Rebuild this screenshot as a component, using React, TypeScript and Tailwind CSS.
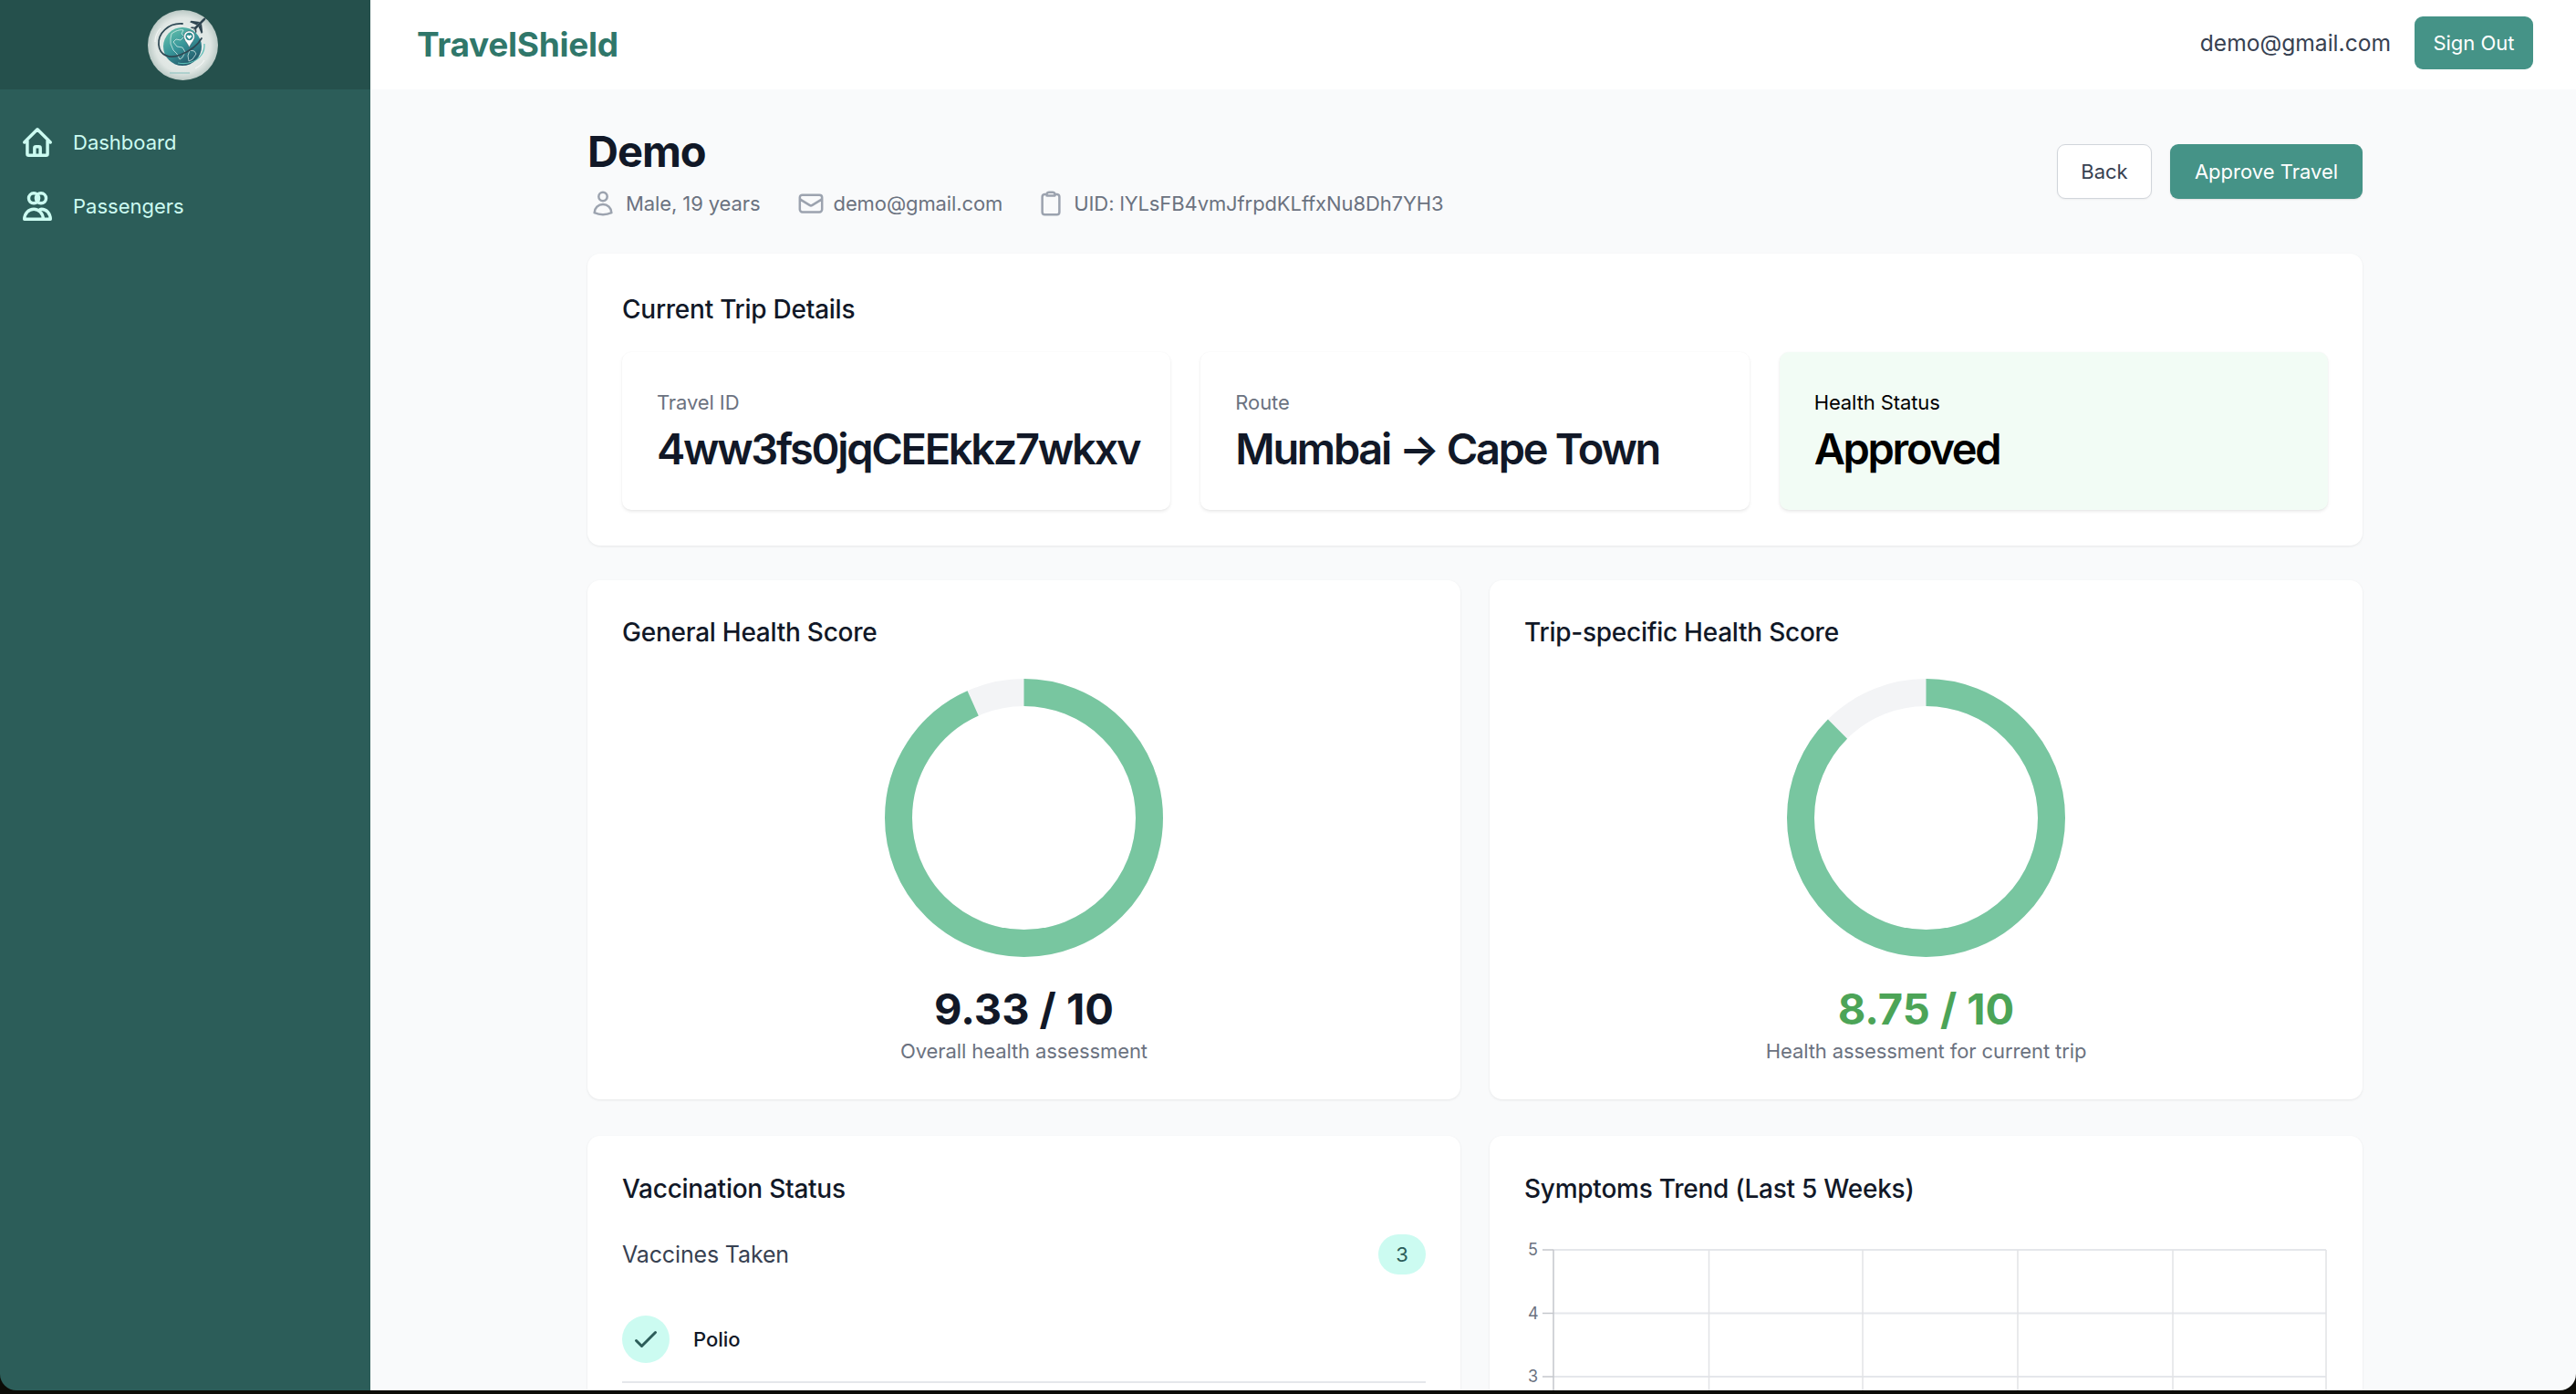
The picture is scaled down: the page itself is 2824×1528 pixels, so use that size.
import type { ReactNode } from 'react';

const RING_RADIUS = 137.5;
const RING_LENGTH = 2 * Math.PI * RING_RADIUS;

const gridRows = [20, 89.5, 159];
const gridColumns = [32, 202.5, 371, 541, 711, 879];

function Logo() {
  return (
    <svg viewBox="0 0 77 77" className="w-[77px] h-[77px]">
      <defs>
        <radialGradient id="logoBg" cx="50%" cy="50%" r="50%">
          <stop offset="0%" stopColor="#edf2ef" />
          <stop offset="78%" stopColor="#dfe6e3" />
          <stop offset="100%" stopColor="#bccac6" />
        </radialGradient>
        <linearGradient id="logoGlobe" x1="0" y1="0" x2="0.6" y2="1">
          <stop offset="0%" stopColor="#6cc8ae" />
          <stop offset="55%" stopColor="#38969a" />
          <stop offset="100%" stopColor="#22596a" />
        </linearGradient>
      </defs>
      <circle cx="38.5" cy="38.5" r="38.5" fill="url(#logoBg)" />
      <circle cx="38" cy="40" r="21" fill="url(#logoGlobe)" />
      {/* continents */}
      <path d="M26 26c4-3 9-5 13-4l-2 4 3 3-4 4-5-1-3 3 4 5 6 1 3 5-3 6-3 2-3-6-4-4-3-7 0-6z" fill="none" stroke="#e6f5f1" strokeWidth="0.7" />
      <path d="M46 44l5 1 2 3-4 6-4 2-1-6z" fill="none" stroke="#e6f5f1" strokeWidth="0.7" />
      {/* swoosh */}
      <path d="M38 15C22 14 11 26 12 38c1 12 12 16 24 11 10-4 18-9 23-18" fill="none" stroke="#2f4a55" strokeWidth="1.800" strokeLinecap="round" />
      <path d="M62 37c1 9-5 17-14 20-5 2-10 2-15 1" fill="none" stroke="#5cbdb6" strokeWidth="1.200" />
      <path d="M8 35c0-6 2-11 6-15M52 64c4-2 8-5 10-9" fill="none" stroke="#ffffff" strokeWidth="0.9" opacity="0.8" />
      <path d="M24 69h22" stroke="#9cc9c6" strokeWidth="1.400" />
      {/* pin with heart */}
      <path d="M45.500 23c-3.500 0-6 2.700-6 6 0 4 4 7 6 12 2-5 6-8 6-12 0-3.300-2.500-6-6-6z" fill="#ffffff" stroke="#2f4a55" strokeWidth="0.5" />
      <circle cx="45.500" cy="29" r="4.200" fill="#2f8a8d" />
      <path d="M45.500 32l-2.400-2.500c-1.100-1.500 1.200-2.800 2.400-1.300 1.200-1.500 3.500-.2 2.400 1.300z" fill="#ffffff" />
      {/* plane */}
      <g transform="translate(56 16) rotate(45)" fill="#2f4550">
        <path d="M-1.300 -8c0-3 2.600-3 2.600 0v14l-1.300 2-1.300-2z" />
        <path d="M-1.300 -3L-9 3v2l7.700-3zM1.300 -3L9 3v2L1.300 2z" />
        <path d="M-1 5l-3 2.500V9l3-1.500zM1 5l3 2.500V9l-3-1.500z" />
      </g>
    </svg>
  );
}

function HomeIcon() {
  return (
    <svg viewBox="0 0 24 24" fill="none" stroke="currentColor" strokeWidth="2.200" strokeLinecap="round" strokeLinejoin="round" className="w-[38px] h-[38px]">
      <path d="M3 12l2-2m0 0l7-7 7 7M5 10v10a1 1 0 001 1h3m10-11l2 2m-2-2v10a1 1 0 01-1 1h-3m-6 0a1 1 0 001-1v-4a1 1 0 011-1h2a1 1 0 011 1v4a1 1 0 001 1m-6 0h6" />
    </svg>
  );
}

function PassengersIcon() {
  return (
    <svg viewBox="0 0 24 24" fill="none" stroke="currentColor" strokeWidth="2.200" strokeLinecap="round" strokeLinejoin="round" className="w-[38px] h-[38px]">
      <circle cx="9.500" cy="6.500" r="3.500" />
      <circle cx="14.500" cy="6.500" r="3.500" />
      <path d="M3 21c0-4 3-7 6.500-7s6.500 3 6.500 7z" />
      <path d="M13.800 14.300c.3-.2.700-.3 1-.3 3.500 0 6.200 3 6.200 7h-5" />
    </svg>
  );
}

function UserIcon() {
  return (
    <svg viewBox="0 0 24 24" fill="none" stroke="currentColor" strokeWidth="2" strokeLinecap="round" strokeLinejoin="round" className="w-[30px] h-[30px]">
      <path d="M15.750 6a3.750 3.750 0 1 1-7.500 0 3.750 3.750 0 0 1 7.500 0ZM4.501 20.118a7.500 7.500 0 0 1 14.998 0A17.933 17.933 0 0 1 12 21.750c-2.676 0-5.216-.584-7.499-1.632Z" />
    </svg>
  );
}

function MailIcon() {
  return (
    <svg viewBox="0 0 24 24" fill="none" stroke="currentColor" strokeWidth="2" strokeLinecap="round" strokeLinejoin="round" className="w-[30px] h-[30px]">
      <path d="M21.750 6.750v10.500a2.250 2.250 0 0 1-2.250 2.250h-15a2.250 2.250 0 0 1-2.250-2.250V6.750m19.500 0A2.250 2.250 0 0 0 19.500 4.500h-15a2.250 2.250 0 0 0-2.250 2.250m19.500 0v.243a2.250 2.250 0 0 1-1.070 1.916l-7.500 4.615a2.250 2.250 0 0 1-2.360 0L3.320 8.910a2.250 2.250 0 0 1-1.070-1.916V6.750" />
    </svg>
  );
}

function ClipboardIcon() {
  return (
    <svg viewBox="0 0 24 24" fill="none" stroke="currentColor" strokeWidth="2" strokeLinecap="round" strokeLinejoin="round" className="w-[30px] h-[30px]">
      <path d="M15.666 3.888A2.250 2.250 0 0 0 13.500 2.250h-3c-1.030 0-1.900.693-2.166 1.638m7.332 0c.055.194.084.400.084.612v0a.750.750 0 0 1-.750.750H9a.750.750 0 0 1-.750-.750v0c0-.212.030-.418.084-.612m7.332 0c.646.049 1.288.110 1.927.184 1.100.128 1.907 1.077 1.907 2.185V19.500a2.250 2.250 0 0 1-2.250 2.250H6.750A2.250 2.250 0 0 1 4.500 19.500V6.257c0-1.108.806-2.057 1.907-2.185a48.208 48.208 0 0 1 1.927-.184" />
    </svg>
  );
}

function CheckIcon() {
  return (
    <svg viewBox="0 0 24 24" fill="none" stroke="currentColor" strokeWidth="2" strokeLinecap="round" strokeLinejoin="round" className="w-9 h-9">
      <path d="M5 13l4 4L19 7" />
    </svg>
  );
}

function Card({ className, children }: { className?: string; children: ReactNode }) {
  return (
    <div className={`bg-white rounded-[14px] shadow-[0_1px_3px_rgba(0,0,0,0.08)] px-[38px] ${className ?? ''}`}>
      {children}
    </div>
  );
}

function CardTitle({ children }: { children: ReactNode }) {
  return <h2 className="text-[28px] leading-[38px] font-medium tracking-[-0.25px] text-[#111827]">{children}</h2>;
}

function TripTile({ label, value, green }: { label: string; value: string; green?: boolean }) {
  return (
    <div
      className={`h-[173px] rounded-[10px] px-[38px] pt-[38px] shadow-[0_2px_4px_-1px_rgba(0,0,0,0.12),0_0_2px_rgba(0,0,0,0.04)] ${
        green ? 'bg-[#f2fcf5] text-black' : 'bg-white text-[#111827]'
      }`}
    >
      <div className={`text-[22px] leading-[34px] tracking-[-0.1px] ${green ? 'text-black' : 'text-[#6b7280]'}`}>{label}</div>
      <div className="mt-[4px] text-[47px] leading-[60px] font-semibold tracking-[-2.3px] whitespace-nowrap">{value}</div>
    </div>
  );
}

function ScoreCard({ title, score, note, scoreClass }: { title: string; score: number; note: string; scoreClass: string }) {
  const filled = (score / 10) * RING_LENGTH;
  return (
    <Card className="pt-[38px] pb-[37px]">
      <CardTitle>{title}</CardTitle>
      <div className="mt-[32px] flex justify-center">
        <svg viewBox="0 0 305 305" className="w-[305px] h-[305px] -rotate-90">
          <circle cx="152.500" cy="152.500" r={RING_RADIUS} fill="none" stroke="#f3f4f6" strokeWidth="30" />
          <circle
            cx="152.500"
            cy="152.500"
            r={RING_RADIUS}
            fill="none"
            stroke="#78c6a0"
            strokeWidth="30"
            strokeDasharray={`${filled} ${RING_LENGTH}`}
          />
        </svg>
      </div>
      <div className={`mt-[27px] text-center text-[47px] leading-[60px] font-bold ${scoreClass}`}>{score} / 10</div>
      <div className="text-center text-[22px] leading-[32px] tracking-[-0.1px] text-[#6b7280]">{note}</div>
    </Card>
  );
}

function SymptomsChart() {
  return (
    <svg width="881" height="190" className="mt-[28px] block overflow-hidden">
      {gridRows.map((y, i) => (
        <g key={y}>
          <line x1="32" y1={y} x2="879" y2={y} stroke="#e5e7eb" strokeWidth="2" />
          <line x1="20" y1={y} x2="32" y2={y} stroke="#c4c7cc" strokeWidth="1.500" />
          <text x="4" y={y + 6} fontSize="18" fill="#6b7280">
            {5 - i}
          </text>
        </g>
      ))}
      {gridColumns.map((x, i) => (
        <line key={x} x1={x} y1="20" x2={x} y2="190" stroke={i === 0 ? '#c4c7cc' : '#e2e3e6'} strokeWidth="1.500" />
      ))}
    </svg>
  );
}

export default function App() {
  return (
    <div className="h-screen overflow-hidden bg-[#0c0c07] font-['Inter',sans-serif]">
      <div className="h-[1524px] flex overflow-hidden rounded-b-[18px]">
        {/* Sidebar */}
        <aside className="w-[406px] shrink-0 bg-[#2c5d59] text-[#ccfbf1]">
          <div className="h-[98px] bg-[#25504c] flex items-center justify-center pr-[5px]">
            <Logo />
          </div>
          <nav className="pt-[39px] pl-[22px] flex flex-col gap-[32px]">
            <div className="flex items-center gap-[20px] h-[38px] text-[22px]">
              <HomeIcon />
              <span>Dashboard</span>
            </div>
            <div className="flex items-center gap-[20px] h-[38px] text-[22px]">
              <PassengersIcon />
              <span>Passengers</span>
            </div>
          </nav>
        </aside>

        <div className="flex-1 min-w-0 bg-[#f9fafb]">
          {/* Top bar */}
          <header className="h-[98px] bg-white flex items-center justify-between pl-[51px] pr-[47px]">
            <span className="text-[37px] font-bold tracking-[-0.3px] text-[#30776a]">TravelShield</span>
            <div className="flex items-center gap-[26px] pb-[4px]">
              <span className="text-[24.6px] text-[#374151]">demo@gmail.com</span>
              <button className="h-[58px] w-[130px] rounded-[9px] bg-[#459387] text-white text-[22px]">Sign Out</button>
            </div>
          </header>

          <main className="w-[1946px] ml-[238px] pt-[38px]">
            <div className="flex items-center justify-between">
              <div>
                <h1 className="text-[47px] leading-[60px] font-bold tracking-[-1px] text-[#111827]">Demo</h1>
                <div className="mt-[10px] flex items-center h-[34px] text-[22px] tracking-[-0.1px] text-[#6b7280]">
                  <span className="text-[#9ca3af] ml-[2px]"><UserIcon /></span>
                  <span className="ml-[10px]">Male, 19 years</span>
                  <span className="text-[#9ca3af] ml-[40px]"><MailIcon /></span>
                  <span className="ml-[10px]">demo@gmail.com</span>
                  <span className="text-[#9ca3af] ml-[38px]"><ClipboardIcon /></span>
                  <span className="ml-[10px]">UID: lYLsFB4vmJfrpdKLffxNu8Dh7YH3</span>
                </div>
              </div>
              <div className="flex items-center gap-[20px]">
                <button className="h-[60px] w-[104px] rounded-[9px] bg-white border-[1.5px] border-[#d1d5db] text-[22px] text-[#374151] shadow-[0_1px_2px_rgba(0,0,0,0.05)]">Back</button>
                <button className="h-[60px] w-[211px] rounded-[9px] bg-[#459387] text-white text-[22px] shadow-[0_1px_2px_rgba(0,0,0,0.1)]">Approve Travel</button>
              </div>
            </div>

            <Card className="mt-[38px] h-[320px] pt-[42px]">
              <CardTitle>Current Trip Details</CardTitle>
              <div className="mt-[28px] grid grid-cols-3 gap-[33px]">
                <TripTile label="Travel ID" value="4ww3fs0jqCEEkkz7wkxv" />
                <TripTile label="Route" value="Mumbai → Cape Town" />
                <TripTile label="Health Status" value="Approved" green />
              </div>
            </Card>

            <div className="mt-[38px] grid grid-cols-2 gap-[32px]">
              <ScoreCard title="General Health Score" score={9.33} note="Overall health assessment" scoreClass="text-[#111827]" />
              <ScoreCard title="Trip-specific Health Score" score={8.75} note="Health assessment for current trip" scoreClass="text-[#4ca457]" />
            </div>

            <div className="mt-[40px] grid grid-cols-2 gap-[32px]">
              <Card className="h-[400px] pt-[39px]">
                <CardTitle>Vaccination Status</CardTitle>
                <div className="mt-[31px] flex items-center justify-between">
                  <span className="pt-[2px] text-[25px] tracking-[-0.15px] text-[#374151]">Vaccines Taken</span>
                  <span className="h-[44px] w-[52px] rounded-full bg-[#ccfbf1] flex items-center justify-center text-[22px] text-[#2c5d59]">3</span>
                </div>
                <div className="mt-[45px] pb-[20px] flex items-center gap-[26px] border-b-2 border-[#e5e7eb]">
                  <span className="h-[52px] w-[52px] rounded-full bg-[#ccfbf1] flex items-center justify-center text-[#2c5d59]">
                    <CheckIcon />
                  </span>
                  <span className="text-[22px] font-medium text-[#111827]">Polio</span>
                </div>
              </Card>
              <Card className="h-[400px] pt-[39px]">
                <CardTitle>Symptoms Trend (Last 5 Weeks)</CardTitle>
                <SymptomsChart />
              </Card>
            </div>
          </main>
        </div>
      </div>
    </div>
  );
}
